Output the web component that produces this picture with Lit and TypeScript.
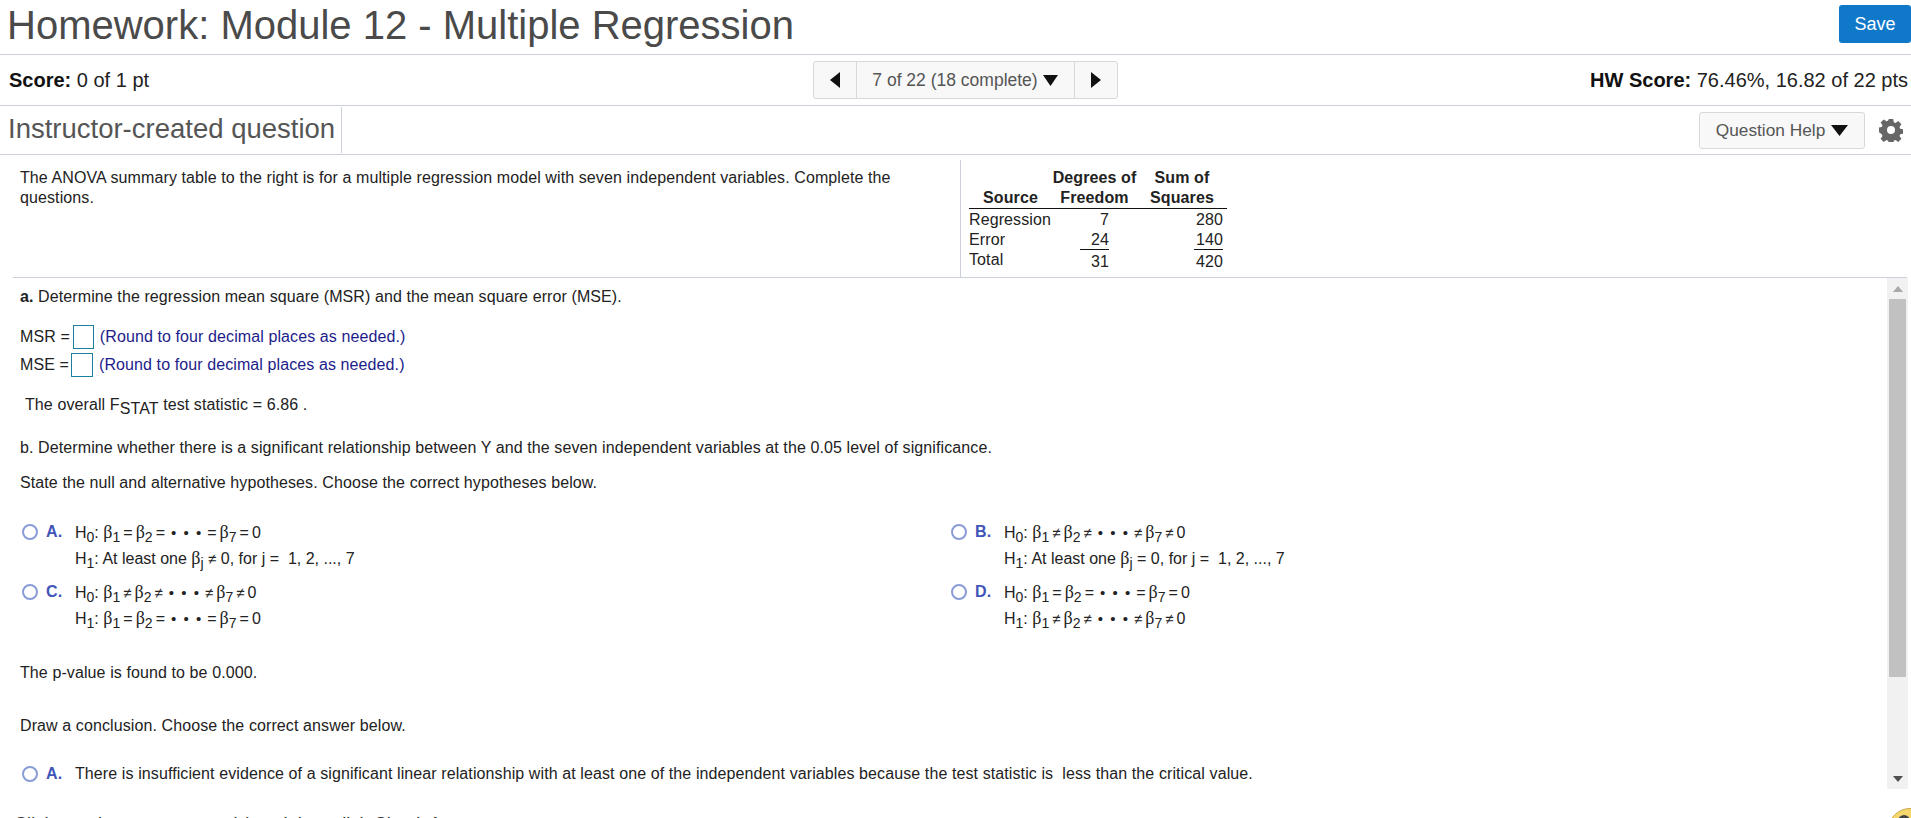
import { LitElement, html, css } from 'lit';
import { customElement } from 'lit/decorators.js';

const beta = (sub: string) => html`<span class="beta">β</span><sub>${sub}</sub>`;
const dots = html`<span class="dots">• • •</span>`;

const allEqual = html`<span class="math">${beta('1')} = ${beta('2')} = ${dots} = ${beta('7')} = 0</span>`;
const noneEqual = html`<span class="math">${beta('1')} <span class="ne">≠</span> ${beta('2')} <span class="ne">≠</span> ${dots} <span class="ne">≠</span> ${beta('7')} <span class="ne">≠</span> 0</span>`;

const choices = [
  {
    letter: 'A',
    h0: allEqual,
    h1: html`At least one ${beta('j')} <span class="ne">≠</span> 0, for j = &nbsp;1, 2, ..., 7`,
  },
  {
    letter: 'B',
    h0: noneEqual,
    h1: html`At least one ${beta('j')} = 0, for j = &nbsp;1, 2, ..., 7`,
  },
  { letter: 'C', h0: noneEqual, h1: allEqual },
  { letter: 'D', h0: allEqual, h1: noneEqual },
];

@customElement('app-root')
export class AppRoot extends LitElement {
  static styles = css`
    :host {
      display: block;
      height: 818px;
      overflow: hidden;
      position: relative;
      background: #fff;
      color: #222;
      font-family: 'Liberation Sans', Arial, sans-serif;
      font-size: 16px;
      letter-spacing: 0.1px;
      line-height: 20px;
    }
    .title-bar {
      display: flex;
      justify-content: space-between;
      height: 54px;
      border-bottom: 1px solid #ccd0db;
      box-sizing: content-box;
    }
    h1 {
      margin: 0;
      padding-left: 7px;
      font-size: 40px;
      font-weight: 400;
      letter-spacing: 0;
      line-height: 50px;
      color: #4a4a4a;
    }
    .save {
      width: 72px;
      height: 38px;
      margin-top: 5px;
      border: 0;
      border-radius: 3px;
      background: #0f78c9;
      color: #fff;
      font: 18px 'Liberation Sans', Arial, sans-serif;
    }
    .score-bar {
      display: grid;
      grid-template-columns: 1fr auto 1fr;
      align-items: center;
      height: 50px;
      padding: 0 3px 0 9px;
      border-bottom: 1px solid #ccd0db;
      font-size: 20px;
      letter-spacing: 0;
      color: #222;
    }
    .score-bar b {
      color: #111;
    }
    .hw {
      justify-self: end;
    }
    .nav {
      display: flex;
      height: 38px;
      box-sizing: border-box;
      width: 305px;
      margin-left: 13px;
      border: 1px solid #d8d8d8;
      border-radius: 3px;
      background: #f8f8f8;
      color: #555;
      font-size: 17.5px;
    }
    .nav-arrow {
      display: flex;
      align-items: center;
      justify-content: center;
      width: 42px;
      flex: none;
    }
    .nav-label {
      flex: 1;
      display: flex;
      align-items: center;
      justify-content: center;
      gap: 5px;
      border-left: 1px solid #d8d8d8;
      border-right: 1px solid #d8d8d8;
    }
    .source-bar {
      display: flex;
      align-items: center;
      height: 48px;
      border-bottom: 1px solid #ccd0db;
    }
    .source {
      width: 333px;
      height: 46px;
      padding-left: 8px;
      border-right: 1px solid #ccd0db;
      font-size: 27.5px;
      letter-spacing: 0;
      line-height: 44px;
      color: #555;
      white-space: nowrap;
    }
    .help {
      display: flex;
      align-items: center;
      justify-content: center;
      gap: 6px;
      width: 166px;
      height: 37px;
      box-sizing: border-box;
      margin-left: auto;
      border: 1px solid #d8d8d8;
      border-radius: 3px;
      background: #f8f8f8;
      color: #555;
      font-size: 17.3px;
      letter-spacing: 0;
    }
    .gear {
      margin: 0 8px 0 14px;
    }
    .prompt {
      display: flex;
      height: 122px;
      margin: 0 4px 0 13px;
      border-bottom: 1px solid #ccd0db;
    }
    .prompt-text {
      flex: none;
      box-sizing: border-box;
      width: 947px;
      padding: 13px 40px 0 7px;
      color: #222;
    }
    .anova {
      margin-top: 5px;
      padding: 8px 0 0 8px;
      border-left: 1px solid #ccd0db;
    }
    table {
      width: 258px;
      border-collapse: collapse;
      table-layout: fixed;
    }
    th,
    td {
      padding: 0;
      height: 20px;
      font-weight: 400;
    }
    th {
      font-weight: 700;
      text-align: center;
      white-space: nowrap;
    }
    thead tr:last-child th {
      height: 19px;
      border-bottom: 1px solid #111;
    }
    tbody tr:first-child td {
      height: 21px;
      vertical-align: bottom;
    }
    td.count {
      text-align: right;
      padding-right: 28px;
    }
    td.sum {
      text-align: right;
      padding-right: 4px;
    }
    .under {
      display: inline-block;
      width: 29px;
      height: 20px;
      border-bottom: 1px solid #111;
      box-sizing: border-box;
      text-align: right;
    }
    .total {
      display: block;
      margin: 2px 0 -2px;
    }
    .body {
      display: flex;
      height: 511px;
    }
    .scroll-content {
      flex: 1;
      padding: 9px 0 0 20px;
      overflow: hidden;
    }
    .scrollbar {
      flex: none;
      display: flex;
      flex-direction: column;
      width: 21px;
      margin-right: 3px;
      background: #f1f1f1;
    }
    .scroll-btn {
      display: flex;
      align-items: center;
      justify-content: center;
      height: 21px;
      flex: none;
    }
    .thumb {
      height: 378px;
      margin: 0 2px;
      background: #c1c1c1;
    }
    .spacer {
      flex: 1;
    }
    p {
      margin: 0;
    }
    sub {
      font-size: 14px;
      line-height: 0;
    }
    .beta {
      font-family: 'Liberation Serif', serif;
      font-size: 18px;
    }
    .ne {
      font-size: 15px;
    }
    .dots {
      padding: 0 3px;
      font-size: 15px;
      word-spacing: 3px;
    }
    .math {
      word-spacing: -1.4px;
    }
    .answer-row {
      display: flex;
      align-items: center;
      gap: 3px;
      height: 24px;
    }
    .msr {
      margin-top: 18px;
    }
    .mse {
      margin-top: 4px;
    }
    .answer-box {
      width: 21px;
      height: 24px;
      box-sizing: border-box;
      border: 1px solid #1d7f9e;
    }
    .answer-box.wide {
      width: 22px;
      margin-left: -1px;
    }
    .hint {
      margin-left: 3px;
      color: #1c1c8a;
    }
    .fstat {
      margin: 18px 0 0 5px;
    }
    .fstat sub {
      font-size: 16px;
    }
    .part-b {
      margin-top: 23px;
    }
    .state {
      margin-top: 15px;
    }
    .choices {
      display: grid;
      grid-template-columns: 929px 1fr;
      row-gap: 8px;
      margin: 29px 0 0 2px;
    }
    .choice {
      display: flex;
    }
    .radio {
      flex: none;
      width: 16px;
      height: 16px;
      box-sizing: border-box;
      margin-top: 2px;
      border: 2px solid #8a9cd8;
      border-radius: 50%;
    }
    .letter {
      flex: none;
      width: 29px;
      margin-left: 8px;
      color: #3f55b8;
      font-weight: 700;
    }
    .hyp {
      height: 26px;
      letter-spacing: 0;
      white-space: nowrap;
    }
    .pvalue {
      margin-top: 29px;
    }
    .conclude {
      margin-top: 33px;
    }
    .last-choice {
      margin: 28px 0 0 2px;
    }
    .footer {
      padding: 25px 0 0 14px;
      color: #333;
      font-size: 18px;
    }
    .assistant {
      position: absolute;
      left: 1888px;
      top: 808px;
      width: 44px;
      height: 44px;
      box-sizing: border-box;
      border: 1px solid #c9a84a;
      border-radius: 50%;
      background: #f5d76e;
    }
    .assistant::after {
      content: '';
      position: absolute;
      left: 9px;
      top: 6px;
      width: 12px;
      height: 8px;
      border-radius: 6px 6px 0 0;
      background: #444;
    }
  `;

  private renderChoice(c: (typeof choices)[number]) {
    return html`
      <div class="choice">
        <span class="radio"></span>
        <span class="letter">${c.letter}.</span>
        <div>
          <div class="hyp">H<sub>0</sub>: ${c.h0}</div>
          <div class="hyp">H<sub>1</sub>: ${c.h1}</div>
        </div>
      </div>
    `;
  }

  render() {
    return html`
      <header class="title-bar">
        <h1>Homework: Module 12 - Multiple Regression</h1>
        <button class="save">Save</button>
      </header>
      <div class="score-bar">
        <div><b>Score:</b> 0 of 1 pt</div>
        <div class="nav">
          <span class="nav-arrow">
            <svg width="12" height="16" viewBox="0 0 12 16"><path d="M11 0v16L1 8z" fill="#111" /></svg>
          </span>
          <span class="nav-label">
            7 of 22 (18 complete)
            <svg width="15" height="11" viewBox="0 0 15 11"><path d="M0 0h15L7.5 11z" fill="#111" /></svg>
          </span>
          <span class="nav-arrow">
            <svg width="12" height="16" viewBox="0 0 12 16"><path d="M1 0v16l10-8z" fill="#111" /></svg>
          </span>
        </div>
        <div class="hw"><b>HW Score:</b> 76.46%, 16.82 of 22 pts</div>
      </div>
      <div class="source-bar">
        <div class="source">Instructor-created question</div>
        <div class="help">
          Question Help
          <svg width="17" height="11" viewBox="0 0 17 11"><path d="M0 0h17L8.5 11z" fill="#111" /></svg>
        </div>
        <svg class="gear" width="24" height="24" viewBox="0 0 24 24">
          <path
            fill="#666"
            fill-rule="evenodd"
            d="M9.8 1h4.4l.6 3.3 1.7.7 2.8-1.9 3.1 3.1-1.9 2.8.7 1.7 3.3.6v4.4l-3.3.6-.7 1.7 1.9 2.8-3.1 3.1-2.8-1.9-1.7.7-.6 3.3H9.8l-.6-3.3-1.7-.7-2.8 1.9-3.1-3.1 1.9-2.8-.7-1.7L-.5 14V9.6l3.3-.6.7-1.7-1.9-2.8 3.1-3.1L7.5 3.3 9.2 2.6zM12 8a4 4 0 1 0 0 8 4 4 0 0 0 0-8z"
          />
        </svg>
      </div>
      <section class="prompt">
        <div class="prompt-text">
          The ANOVA summary table to the right is for a multiple regression model with seven
          independent variables. Complete the questions.
        </div>
        <div class="anova">
          <table>
            <colgroup>
              <col style="width:83px" />
              <col style="width:85px" />
              <col style="width:90px" />
            </colgroup>
            <thead>
              <tr>
                <th></th>
                <th>Degrees of</th>
                <th>Sum of</th>
              </tr>
              <tr>
                <th>Source</th>
                <th>Freedom</th>
                <th>Squares</th>
              </tr>
            </thead>
            <tbody>
              <tr>
                <td>Regression</td>
                <td class="count">7</td>
                <td class="sum">280</td>
              </tr>
              <tr>
                <td>Error</td>
                <td class="count"><span class="under">24</span></td>
                <td class="sum"><span class="under">140</span></td>
              </tr>
              <tr>
                <td>Total</td>
                <td class="count"><span class="total">31</span></td>
                <td class="sum"><span class="total">420</span></td>
              </tr>
            </tbody>
          </table>
        </div>
      </section>
      <div class="body">
        <div class="scroll-content">
          <p><b>a.</b> Determine the regression mean square (MSR) and the mean square error (MSE).</p>
          <div class="answer-row msr">
            MSR = <span class="answer-box"></span>
            <span class="hint">(Round to four decimal places as needed.)</span>
          </div>
          <div class="answer-row mse">
            MSE = <span class="answer-box wide"></span>
            <span class="hint">(Round to four decimal places as needed.)</span>
          </div>
          <p class="fstat">The overall F<sub>STAT</sub> test statistic = 6.86 .</p>
          <p class="part-b">
            b. Determine whether there is a significant relationship between Y and the seven
            independent variables at the 0.05 level of significance.
          </p>
          <p class="state">State the null and alternative hypotheses. Choose the correct hypotheses below.</p>
          <div class="choices">${choices.map((c) => this.renderChoice(c))}</div>
          <p class="pvalue">The p-value is found to be 0.000.</p>
          <p class="conclude">Draw a conclusion. Choose the correct answer below.</p>
          <div class="choice last-choice">
            <span class="radio"></span>
            <span class="letter">A.</span>
            <div>
              There is insufficient evidence of a significant linear relationship with at least one
              of the independent variables because the test statistic is &nbsp;less than the
              critical value.
            </div>
          </div>
        </div>
        <div class="scrollbar">
          <div class="scroll-btn">
            <svg width="10" height="6" viewBox="0 0 10 6"><path d="M5 0l5 6H0z" fill="#a8a8a8" /></svg>
          </div>
          <div class="thumb"></div>
          <div class="spacer"></div>
          <div class="scroll-btn">
            <svg width="10" height="6" viewBox="0 0 10 6"><path d="M5 6l5-6H0z" fill="#505050" /></svg>
          </div>
        </div>
      </div>
      <div class="footer">Click to select your answer(s) and then click Check Answer.</div>
      <div class="assistant"></div>
    `;
  }
}

declare global {
  interface HTMLElementTagNameMap {
    'app-root': AppRoot;
  }
}
